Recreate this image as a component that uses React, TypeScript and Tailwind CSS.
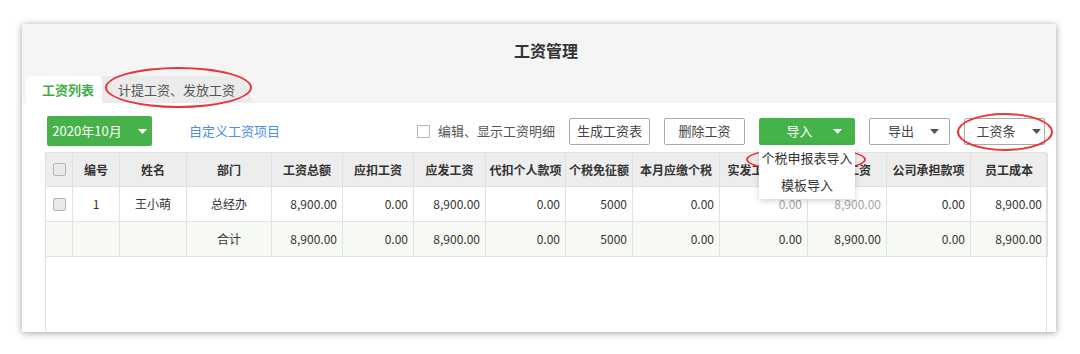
const FONT = "[font-family:'Noto_Sans_CJK_SC','Liberation_Sans',sans-serif]";

const headers = [
  "",
  "编号",
  "姓名",
  "部门",
  "工资总额",
  "应扣工资",
  "应发工资",
  "代扣个人款项",
  "个税免征额",
  "本月应缴个税",
  "实发工资调整",
  "实发工资",
  "公司承担款项",
  "员工成本",
];

const rowOne = ["", "1", "王小萌", "总经办", "8,900.00", "0.00", "8,900.00", "0.00", "5000", "0.00", "0.00", "8,900.00", "0.00", "8,900.00"];
const totalRow = ["", "", "", "合计", "8,900.00", "0.00", "8,900.00", "0.00", "5000", "0.00", "0.00", "8,900.00", "0.00", "8,900.00"];

const GRID =
  "grid grid-cols-[27px_47px_67px_85px_71px_71px_72px_80px_67px_87px_88px_79px_84px_77px]";

function Caret({ color = "#555" }: { color?: string }) {
  return (
    <svg width="9" height="5" viewBox="0 0 9 5" className="shrink-0">
      <polygon points="0,0 9,0 4.5,5" fill={color} />
    </svg>
  );
}

function GrayBox() {
  return <span className="block w-[13px] h-[13px] rounded-[2px] border border-[#b5b5b5] bg-[#e9e9e9]" />;
}

function OutlineButton({ label, caret, className = "" }: { label: string; caret?: boolean; className?: string }) {
  return (
    <button
      type="button"
      className={`h-[27px] w-[81px] flex items-center justify-center gap-[16px] rounded-[2px] border border-[#a9a9a9] bg-white text-[13px] text-[#444] ${className}`}
    >
      <span>{label}</span>
      {caret && <Caret />}
    </button>
  );
}

function Cell({ text, idx, muted }: { text: string; idx: number; muted?: boolean }) {
  const align = idx < 4 ? "justify-center" : "justify-end pr-[5px]";
  return (
    <div
      className={`h-[35px] flex items-center ${align} border-r border-b border-[#e1e1e1] text-[12px] ${
        muted ? "text-[#a5a5a5]" : "text-[#333]"
      }`}
    >
      {idx === 0 && text === "box" ? <GrayBox /> : text}
    </div>
  );
}

function Ellipse({ className }: { className: string }) {
  return <div className={`absolute rounded-[50%] border-2 border-[#e8353b] pointer-events-none ${className}`} />;
}

export default function App() {
  return (
    <div className={`relative w-[1080px] h-[354px] bg-white pt-[24px] pl-[22px] ${FONT}`}>
      <div className="w-[1034px] h-[308px] flex flex-col bg-white shadow-[0_1px_7px_rgba(0,0,0,0.38)]">
        {/* header */}
        <div className="bg-[#f5f5f5] flex flex-col">
          <div className="h-[52px] flex items-center justify-center pl-[14px]">
            <h1 className="text-[16px] font-bold text-[#333]">工资管理</h1>
          </div>
          <div className="h-[27px] flex items-end pl-[4px]">
            <div className="h-[27px] w-[76px] flex items-center pl-[16px] bg-white rounded-t-[6px] text-[13px] font-bold text-[#3fad48]">
              工资列表
            </div>
            <div className="h-[27px] w-[152px] flex items-center pl-[16px] bg-[#ebebeb] text-[13px] text-[#555] [clip-path:polygon(0_0,calc(100%-12px)_0,100%_100%,0_100%)]">
              计提工资、发放工资
            </div>
          </div>
        </div>

        {/* content */}
        <div className="flex-1 flex flex-col pl-[23px] pr-[9px]">
          <div className="mt-[13px] h-[30px] flex items-center pr-[2px]">
            <button
              type="button"
              className="ml-[2px] h-[30px] w-[105px] flex items-center justify-center gap-[16px] rounded-[2px] bg-[#45b34a] text-[13px] text-white"
            >
              <span>2020年10月</span>
              <Caret color="#fff" />
            </button>
            <span className="ml-[37px] text-[13px] text-[#4a8ee8]">自定义工资项目</span>

            <div className="ml-auto flex items-center gap-[14px]">
              <label className="flex items-center gap-[8px] text-[13px] text-[#555]">
                <span className="block w-[13px] h-[13px] border border-[#b8b8b8] bg-white" />
                编辑、显示工资明细
              </label>
              <OutlineButton label="生成工资表" />
              <OutlineButton label="删除工资" />
              <div className="relative">
                <button
                  type="button"
                  className="h-[27px] w-[96px] flex items-center justify-center gap-[20px] pl-[14px] rounded-[2px] bg-[#45b34a] text-[13px] text-white"
                >
                  <span>导入</span>
                  <Caret color="#fff" />
                </button>
                <div className="absolute left-0 top-full w-[96px] z-10 bg-white shadow-[0_2px_6px_rgba(0,0,0,0.18)] text-[13px] text-[#333]">
                  <div className="h-[27px] flex items-center justify-center">个税申报表导入</div>
                  <div className="h-[27px] flex items-center justify-center">模板导入</div>
                </div>
              </div>
              <OutlineButton label="导出" caret className="pl-[8px]" />
              <OutlineButton label="工资条" caret className="pl-[8px] gap-[9px]" />
            </div>
          </div>

          {/* table */}
          <div className="mt-[6px] flex-1 flex flex-col border-l border-r border-[#e1e1e1]">
            <div className={`${GRID} bg-[#ededed] border-t border-[#e1e1e1]`}>
              {headers.map((h, i) => (
                <div
                  key={i}
                  className="h-[34px] flex items-center justify-center border-r border-b border-[#e1e1e1] text-[12px] font-bold text-[#333] whitespace-nowrap overflow-hidden"
                >
                  {i === 0 ? <GrayBox /> : h}
                </div>
              ))}
            </div>
            <div className={`${GRID} bg-white`}>
              {rowOne.map((t, i) => (
                <Cell key={i} idx={i} text={i === 0 ? "box" : t} muted={i === 10 || i === 11} />
              ))}
            </div>
            <div className={`${GRID} bg-[#f7f9f4]`}>
              {totalRow.map((t, i) => (
                <Cell key={i} idx={i} text={t} />
              ))}
            </div>
          </div>
        </div>
      </div>

      <Ellipse className="left-[105px] top-[67px] w-[147px] h-[41px]" />
      <Ellipse className="left-[957px] top-[113px] w-[96px] h-[38px]" />
      <Ellipse className="left-[746px] top-[147px] w-[120px] h-[25px]" />
    </div>
  );
}
